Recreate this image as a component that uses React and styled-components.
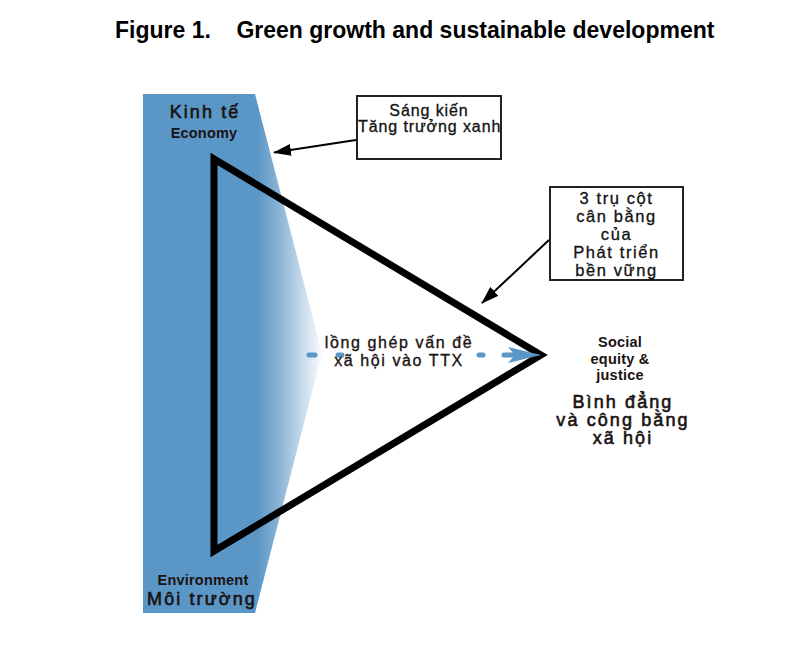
import React from "react";
import styled, { createGlobalStyle } from "styled-components";

const GlobalStyle = createGlobalStyle`
  html, body { margin: 0; padding: 0; background: #ffffff; }
  body { font-family: "Liberation Sans", Arial, sans-serif; color: #111; }
`;

const Page = styled.div`
  width: 801px;
  height: 659px;
  display: flex;
  flex-direction: column;
  background: #fff;
  overflow: hidden;
`;

const Title = styled.h1`
  margin: 0;
  height: 60px;
  box-sizing: border-box;
  padding: 17px 0 0 115px;
  font-family: "Liberation Sans", Arial, sans-serif;
  font-weight: 700;
  font-size: 23px;
  line-height: 26px;
  white-space: pre;
  color: #000;
`;

const Diagram = styled.div`
  position: relative;
  flex: 1;
  width: 801px;
`;

const Drawing = styled.svg`
  position: absolute;
  left: 0;
  top: 0;
  width: 801px;
  height: 599px;
`;

const variants = {
  big: { fs: 18, lh: 18, fw: 400, ls: 2.1, stroke: "0.6px" },
  small: { fs: 14.5, lh: 16.5, fw: 700, ls: 0.2, stroke: "0" },
  mid: { fs: 16, lh: 18, fw: 400, ls: 1.6, stroke: "0.35px" },
};

const Label = styled.div`
  position: absolute;
  left: ${(p) => p.$x}px;
  top: ${(p) => p.$y}px;
  transform: translateX(-50%);
  text-align: center;
  white-space: nowrap;
  color: #1a1212;
  font-family: "Liberation Sans", Arial, sans-serif;
  font-size: ${(p) => variants[p.$kind].fs}px;
  line-height: ${(p) => variants[p.$kind].lh}px;
  font-weight: ${(p) => variants[p.$kind].fw};
  letter-spacing: ${(p) => variants[p.$kind].ls}px;
  -webkit-text-stroke: ${(p) => variants[p.$kind].stroke} #1a1212;
`;

const NoteBox = styled.div`
  position: absolute;
  left: ${(p) => p.$x}px;
  top: ${(p) => p.$y}px;
  width: ${(p) => p.$w}px;
  height: ${(p) => p.$h}px;
  box-sizing: border-box;
  border: 2px solid #222;
  background: #fff;
  padding-top: ${(p) => p.$pad}px;
  text-align: center;
  white-space: nowrap;
  color: #111;
  font-family: "Liberation Sans", Arial, sans-serif;
  font-size: ${(p) => p.$fs}px;
  line-height: ${(p) => p.$lh}px;
  letter-spacing: ${(p) => p.$ls}px;
  -webkit-text-stroke: 0.3px #111;
`;

const BLUE = "#5b97c6";

function DiagramArt() {
  return (
    <Drawing viewBox="0 0 801 599" xmlns="http://www.w3.org/2000/svg">
      <defs>
        <linearGradient id="fade" gradientUnits="userSpaceOnUse" x1="258" y1="0" x2="324" y2="0">
          <stop offset="0" stopColor={BLUE} />
          <stop offset="0.35" stopColor="#8fb7d8" />
          <stop offset="1" stopColor="#ffffff" />
        </linearGradient>
        <marker id="head" markerUnits="userSpaceOnUse" markerWidth="18" markerHeight="12" refX="17" refY="6" orient="auto">
          <path d="M0,0 L18,6 L0,12 Z" fill="#000" />
        </marker>
      </defs>
      <polygon points="143,34 255,34 322,293 255,553 143,553" fill="url(#fade)" />
      <polygon
        points="214,99 214,491 541,295"
        fill="none"
        stroke="#000"
        strokeWidth="7"
        strokeLinejoin="miter"
      />
      <line x1="356" y1="80" x2="274" y2="92.5" stroke="#000" strokeWidth="2" markerEnd="url(#head)" />
      <line x1="549" y1="180" x2="482" y2="243" stroke="#000" strokeWidth="2" markerEnd="url(#head)" />
      <g stroke={BLUE} strokeWidth="5" strokeLinecap="round">
        <line x1="309" y1="295" x2="315" y2="295" />
        <line x1="338" y1="295" x2="342" y2="295" />
        <line x1="479" y1="295" x2="483" y2="295" />
        <line x1="504" y1="295" x2="522" y2="295" />
      </g>
      <path d="M508,287 L541,295 L508,303 L515,295 Z" fill={BLUE} />
    </Drawing>
  );
}

export default function App() {
  return (
    <Page>
      <GlobalStyle />
      <Title>{"Figure 1.    Green growth and sustainable development"}</Title>
      <Diagram>
        <DiagramArt />
        <Label $kind="big" $x={205} $y={43}>Kinh tế</Label>
        <Label $kind="small" $x={204} $y={65}>Economy</Label>
        <Label $kind="small" $x={203} $y={512}>Environment</Label>
        <Label $kind="big" $x={202} $y={530}>Môi trường</Label>
        <NoteBox $x={356} $y={35} $w={146} $h={65} $pad={6} $fs={16} $lh={16} $ls={0.9}>
          Sáng kiến
          <br />
          Tăng trưởng xanh
        </NoteBox>
        <NoteBox $x={549} $y={126} $w={135} $h={95} $pad={1} $fs={16.5} $lh={18} $ls={1.6}>
          3 trụ cột
          <br />
          cân bằng
          <br />
          của
          <br />
          Phát triển
          <br />
          bền vững
        </NoteBox>
        <Label $kind="mid" $x={399} $y={274}>
          lồng ghép vấn đề
          <br />
          xã hội vào TTX
        </Label>
        <Label $kind="small" $x={620} $y={274}>
          Social
          <br />
          equity &amp;
          <br />
          justice
        </Label>
        <Label $kind="big" $x={623} $y={333}>
          Bình đẳng
          <br />
          và công bằng
          <br />
          xã hội
        </Label>
      </Diagram>
    </Page>
  );
}
